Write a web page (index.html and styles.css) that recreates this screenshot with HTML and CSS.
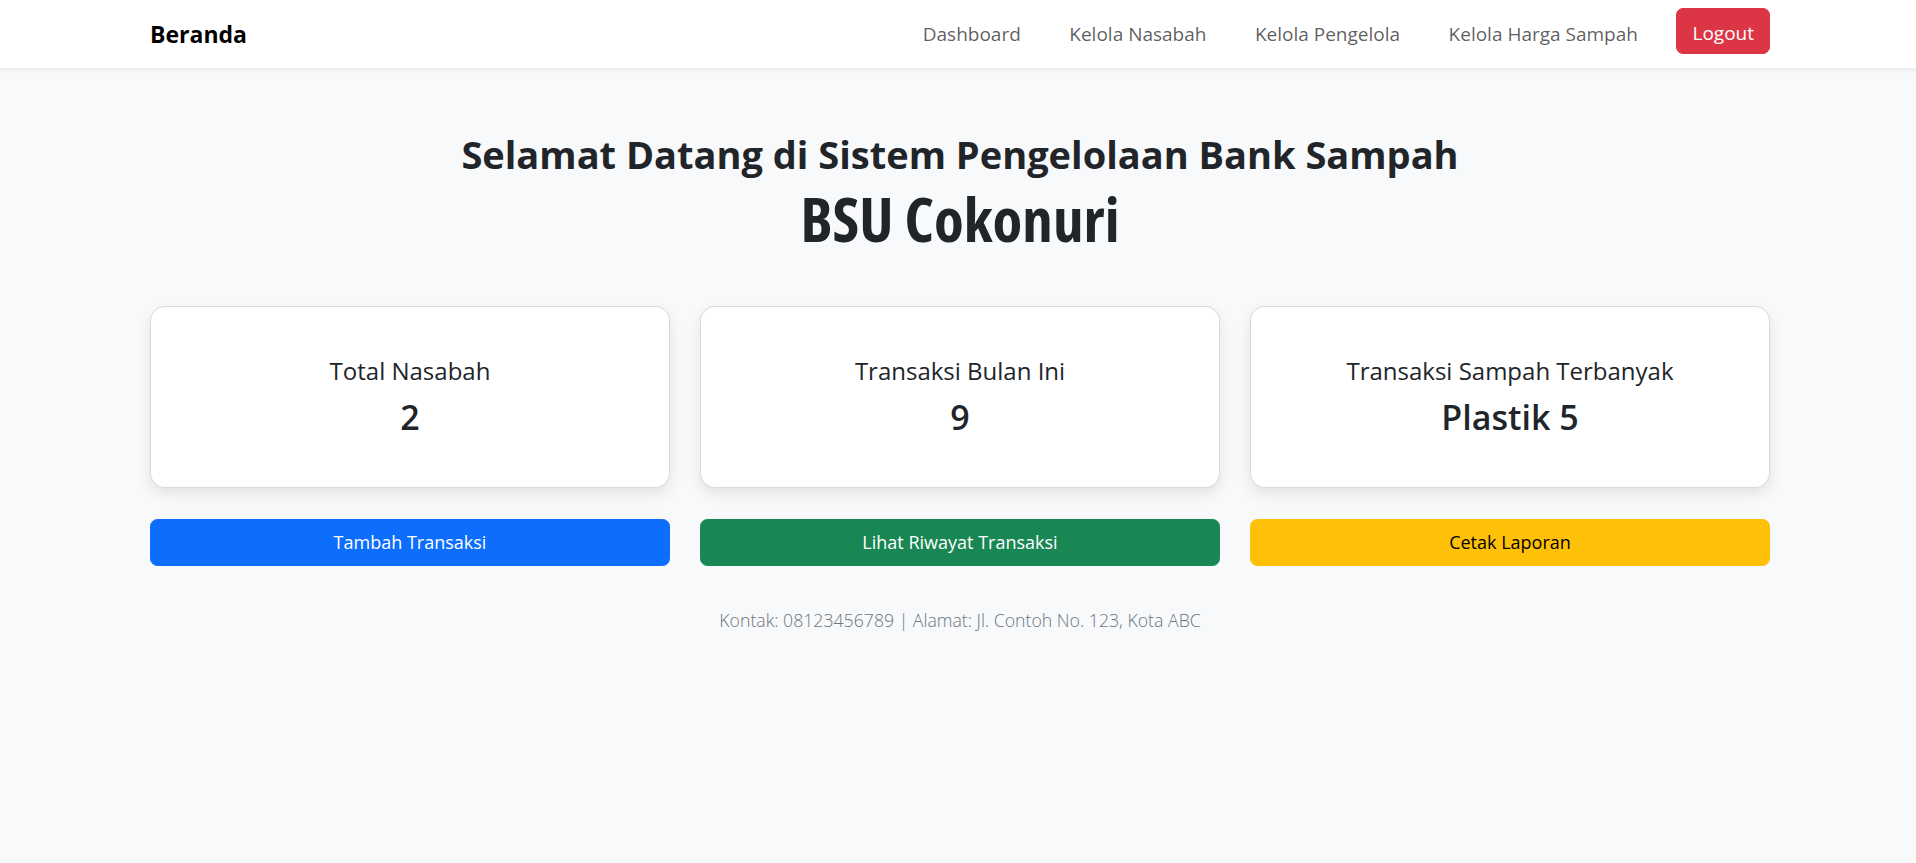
FILE: index.html
```html
<!DOCTYPE html>
<html lang="id">
<head>
<meta charset="utf-8">
<title>Beranda - BSU Cokonuri</title>
<link rel="stylesheet" href="styles.css">
</head>
<body>
<nav class="navbar">
  <div class="container nav-inner">
    <a class="brand" href="#">Beranda</a>
    <ul class="nav-menu">
      <li><a class="nav-link" href="#">Dashboard</a></li>
      <li><a class="nav-link" href="#">Kelola Nasabah</a></li>
      <li><a class="nav-link" href="#">Kelola Pengelola</a></li>
      <li><a class="nav-link" href="#">Kelola Harga Sampah</a></li>
      <li><a class="btn btn-danger btn-logout" href="#">Logout</a></li>
    </ul>
  </div>
</nav>

<main class="container main">
  <h2 class="welcome">Selamat Datang di Sistem Pengelolaan Bank Sampah</h2>
  <h1 class="org-name">BSU Cokonuri</h1>

  <div class="stat-row">
    <div class="card">
      <h5 class="card-title">Total Nasabah</h5>
      <h3 class="card-value">2</h3>
    </div>
    <div class="card">
      <h5 class="card-title">Transaksi Bulan Ini</h5>
      <h3 class="card-value">9</h3>
    </div>
    <div class="card">
      <h5 class="card-title">Transaksi Sampah Terbanyak</h5>
      <h3 class="card-value">Plastik 5</h3>
    </div>
  </div>

  <div class="action-row">
    <a class="btn btn-primary" href="#">Tambah Transaksi</a>
    <a class="btn btn-success" href="#">Lihat Riwayat Transaksi</a>
    <a class="btn btn-warning" href="#">Cetak Laporan</a>
  </div>

  <footer class="footer">Kontak: 08123456789 | Alamat: Jl. Contoh No. 123, Kota ABC</footer>
</main>
</body>
</html>
```
FILE: styles.css
```css
* { box-sizing: border-box; }

html, body {
  margin: 0;
  padding: 0;
}

body {
  background: #f8f9fa;
  color: #212529;
  font-family: "Open Sans", "Noto Sans", sans-serif;
  font-size: 20px;
  line-height: 1.5;
  min-height: 863px;
}

a { text-decoration: none; }

.container {
  width: 1624px;
  padding-left: 4px;
  margin: 0 auto;
}

/* Buttons */
.btn {
  display: block;
  text-align: center;
  font-size: 18px;
  line-height: 30px;
  padding: 7.5px 15px;
  border: 1px solid transparent;
  border-radius: 7.5px;
  color: #fff;
}

.btn-danger { background: #dc3545; border-color: #dc3545; }
.btn-primary { background: #0d6efd; border-color: #0d6efd; }
.btn-success { background: #198754; border-color: #198754; }
.btn-warning { background: #ffc107; border-color: #ffc107; color: #000; }

/* Navbar */
.navbar {
  background: #fff;
  height: 68px;
  box-shadow: 0 2px 5px rgba(0, 0, 0, 0.075);
}

.nav-inner {
  height: 68px;
  display: flex;
  align-items: center;
  justify-content: space-between;
}

.brand {
  color: #000;
  font-weight: 700;
  font-size: 23px;
  line-height: 1.5;
}

.nav-menu {
  list-style: none;
  margin: 0;
  padding: 0;
  display: flex;
  align-items: center;
  gap: 8.5px;
}

.nav-link {
  display: block;
  color: rgba(0, 0, 0, 0.65);
  font-size: 19px;
  padding: 10px 20px;
}

.btn-logout {
  margin-left: 10px;
  margin-bottom: 6px;
  height: 46px;
  padding: 9px 15px 5px;
  border-radius: 7px;
  font-size: 19px;
}

/* Main */
.main {
  padding-top: 64px;
  padding-bottom: 40px;
}

.welcome {
  margin: 0 0 4px;
  text-align: center;
  font-size: 38px;
  line-height: 1.2;
  font-weight: 700;
}

.org-name {
  margin: 0;
  text-align: center;
  font-size: 61px;
  line-height: 1.2;
  font-weight: 700;
  font-stretch: 75%;
}

.stat-row {
  margin-top: 51px;
  display: grid;
  grid-template-columns: repeat(3, 1fr);
  gap: 30px;
}

.card {
  background: #fff;
  border: 1px solid rgba(0, 0, 0, 0.15);
  border-radius: 15px;
  box-shadow: 0 6px 14px rgba(0, 0, 0, 0.09);
  height: 182px;
  padding: 49px 20px;
  text-align: center;
}

.card-title {
  margin: 0 0 10px;
  font-size: 24px;
  line-height: 30px;
  font-weight: 500;
}

.card-value {
  margin: 0;
  font-size: 34px;
  line-height: 42px;
  font-weight: 550;
}

.action-row {
  margin-top: 31px;
  display: grid;
  grid-template-columns: repeat(3, 1fr);
  gap: 30px;
}

.footer {
  margin-top: 39px;
  text-align: center;
  color: #6c757d;
  font-size: 17.7px;
  line-height: 30px;
  font-weight: 300;
}
```
